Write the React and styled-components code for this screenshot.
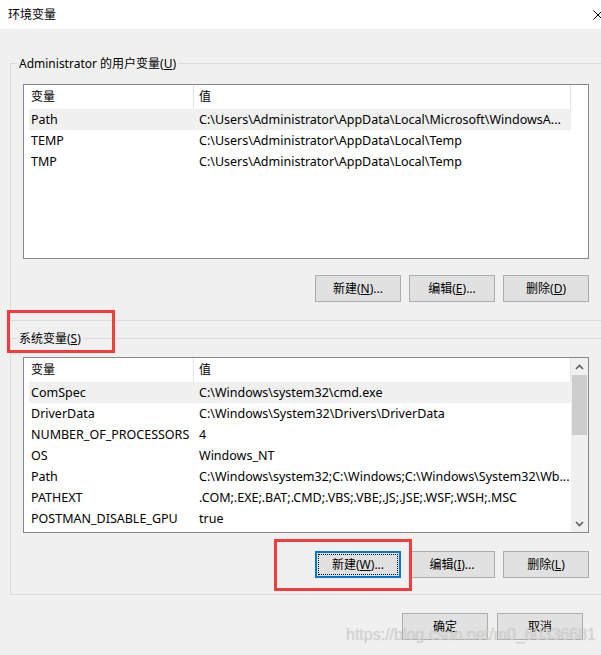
import React from 'react';
import styled, { createGlobalStyle, css } from 'styled-components';

const Global = createGlobalStyle`
  html, body { margin: 0; padding: 0; background: #f0f0f0; }
  body {
    font-family: "Noto Sans", "Noto Sans CJK SC", sans-serif;
    font-size: 12px;
    color: #000;
  }
`;

const Window = styled.div`
  position: relative;
  width: 601px;
  height: 655px;
  overflow: hidden;
  background: #f0f0f0;
`;

const TitleBar = styled.div`
  height: 29px;
  background: #fff;
  display: flex;
  align-items: center;
  padding-left: 8px;
  font-size: 12px;
  line-height: 16px;
`;

const CloseIcon = styled.svg`
  margin-left: auto;
  margin-right: -2px;
  flex: none;
`;

const Body = styled.div`
  display: flex;
  flex-direction: column;
  align-items: flex-start;
  padding-left: 10px;
`;

const GroupBox = styled.fieldset`
  margin: ${(p) => p.$mt}px 0 0 0;
  padding: ${(p) => p.$pt}px 16px ${(p) => p.$pb}px 12px;
  border: 1px solid #dcdcdc;
  min-width: 0;
`;

const Legend = styled.legend`
  padding: 0 2px;
  margin-left: -6px;
  font-size: 12px;
  line-height: 16px;
`;

const LegendText = styled.span`
  position: relative;
  top: 1px;
`;

const List = styled.div`
  box-sizing: border-box;
  width: 566px;
  height: ${(p) => p.$h}px;
  border: 1px solid #828790;
  background: #fff;
  display: flex;
  overflow: hidden;
`;

const Table = styled.div`
  box-sizing: border-box;
  width: 547px;
  flex: none;
  padding-left: 5px;
  display: flex;
  flex-direction: column;
`;

const HeaderRow = styled.div`
  display: grid;
  grid-template-columns: 165px 1fr;
  height: 24px;
`;

const HeaderCell = styled.div`
  display: flex;
  align-items: center;
  padding-left: ${(p) => (p.$first ? 2 : 5)}px;
  border-right: 1px solid #e5e5e5;
  font-size: 12px;
  line-height: 16px;
`;

const Row = styled.div`
  display: grid;
  grid-template-columns: 165px 1fr;
  height: 21px;
  align-items: center;
  background: ${(p) => (p.$selected ? '#f0f0f0' : 'transparent')};
  font-size: 12.5px;
  line-height: 16px;
`;

const Cell = styled.div`
  padding-left: ${(p) => (p.$first ? 2 : 5)}px;
  white-space: nowrap;
  overflow: hidden;
`;

const ScrollBar = styled.div`
  width: 17px;
  flex: none;
  background: #f0f0f0;
  display: flex;
  flex-direction: column;
`;

const ArrowBtn = styled.div`
  height: 17px;
  display: flex;
  align-items: center;
  justify-content: center;
`;

const Track = styled.div`
  flex: 1;
  padding: 0 1px;
`;

const Thumb = styled.div`
  height: 60px;
  background: #cdcdcd;
`;

const ButtonRow = styled.div`
  display: flex;
  justify-content: flex-end;
  gap: 8px;
  width: 566px;
  margin-top: ${(p) => p.$mt}px;
`;

const Button = styled.button`
  position: relative;
  box-sizing: border-box;
  width: 86px;
  height: 27px;
  padding: 0;
  background: #e1e1e1;
  border: 1px solid #adadad;
  font-family: "Noto Sans", "Noto Sans CJK SC", sans-serif;
  font-size: 12px;
  line-height: 16px;
  color: #000;
  ${(p) =>
    p.$focused &&
    css`
      border-color: #0078d7;
      box-shadow: inset 0 0 0 1px #0078d7;
      &::after {
        content: '';
        position: absolute;
        inset: 2px;
        border: 1px dotted #000;
      }
    `}
`;

const BottomRow = styled.div`
  align-self: stretch;
  display: flex;
  justify-content: flex-end;
  gap: 9px;
  margin-top: 18px;
  padding-right: 18px;
`;

const RedBox = styled.div`
  position: absolute;
  box-sizing: border-box;
  border: 3px solid #f33c3c;
  pointer-events: none;
`;

const Watermark = styled.div`
  position: absolute;
  left: 346px;
  top: 626px;
  font-family: "Liberation Sans", Arial, sans-serif;
  font-size: 16px;
  line-height: 18px;
  color: rgba(215, 215, 215, 0.8);
  text-shadow: 0 0 1px rgba(120, 120, 120, 0.35);
  white-space: nowrap;
  pointer-events: none;
`;

const Chevron = ({ down }) => (
  <svg width="9" height="6" viewBox="0 0 9 6">
    <polyline
      points={down ? '1,1 4.5,4.5 8,1' : '1,5 4.5,1.5 8,5'}
      fill="none"
      stroke="#606060"
      strokeWidth="1.6"
    />
  </svg>
);

const userVars = [
  ['Path', 'C:\\Users\\Administrator\\AppData\\Local\\Microsoft\\WindowsA...'],
  ['TEMP', 'C:\\Users\\Administrator\\AppData\\Local\\Temp'],
  ['TMP', 'C:\\Users\\Administrator\\AppData\\Local\\Temp'],
];

const sysVars = [
  ['ComSpec', 'C:\\Windows\\system32\\cmd.exe'],
  ['DriverData', 'C:\\Windows\\System32\\Drivers\\DriverData'],
  ['NUMBER_OF_PROCESSORS', '4'],
  ['OS', 'Windows_NT'],
  ['Path', 'C:\\Windows\\system32;C:\\Windows;C:\\Windows\\System32\\Wb...'],
  ['PATHEXT', '.COM;.EXE;.BAT;.CMD;.VBS;.VBE;.JS;.JSE;.WSF;.WSH;.MSC'],
  ['POSTMAN_DISABLE_GPU', 'true'],
];

const VarTable = ({ rows }) => (
  <Table>
    <HeaderRow>
      <HeaderCell $first>变量</HeaderCell>
      <HeaderCell>值</HeaderCell>
    </HeaderRow>
    {rows.map(([k, v], i) => (
      <Row key={i} $selected={i === 0}>
        <Cell $first>{k}</Cell>
        <Cell>{v}</Cell>
      </Row>
    ))}
  </Table>
);

const Label = ({ text, k, tail = '' }) => (
  <>
    {text}(<u>{k}</u>){tail}
  </>
);

export default function App() {
  return (
    <>
      <Global />
      <Window>
        <TitleBar>
          环境变量
          <CloseIcon width="10" height="10" viewBox="0 0 10 10">
            <line x1="0.5" y1="0.5" x2="9.5" y2="9.5" stroke="#000" strokeWidth="1" />
            <line x1="9.5" y1="0.5" x2="0.5" y2="9.5" stroke="#000" strokeWidth="1" />
          </CloseIcon>
        </TitleBar>
        <Body>
          <GroupBox $mt={26} $pt={13} $pb={18}>
            <Legend>
              <LegendText>
                Administrator 的用户变量(<u>U</u>)
              </LegendText>
            </Legend>
            <List $h={175}>
              <VarTable rows={userVars} />
            </List>
            <ButtonRow $mt={16}>
              <Button><Label text="新建" k="N" tail="..." /></Button>
              <Button><Label text="编辑" k="E" tail="..." /></Button>
              <Button><Label text="删除" k="D" /></Button>
            </ButtonRow>
          </GroupBox>
          <GroupBox $mt={9} $pt={11} $pb={16}>
            <Legend>
              <LegendText>
                系统变量(<u>S</u>)
              </LegendText>
            </Legend>
            <List $h={176}>
              <VarTable rows={sysVars} />
              <ScrollBar>
                <ArrowBtn><Chevron /></ArrowBtn>
                <Track><Thumb /></Track>
                <ArrowBtn><Chevron down /></ArrowBtn>
              </ScrollBar>
            </List>
            <ButtonRow $mt={18}>
              <Button $focused><Label text="新建" k="W" tail="..." /></Button>
              <Button><Label text="编辑" k="I" tail="..." /></Button>
              <Button><Label text="删除" k="L" /></Button>
            </ButtonRow>
          </GroupBox>
          <BottomRow>
            <Button>确定</Button>
            <Button>取消</Button>
          </BottomRow>
        </Body>
        <RedBox style={{ left: 7, top: 310, width: 108, height: 43 }} />
        <RedBox style={{ left: 274, top: 539, width: 138, height: 52 }} />
        <Watermark>https://blog.csdn.net/m0_60336681</Watermark>
      </Window>
    </>
  );
}
